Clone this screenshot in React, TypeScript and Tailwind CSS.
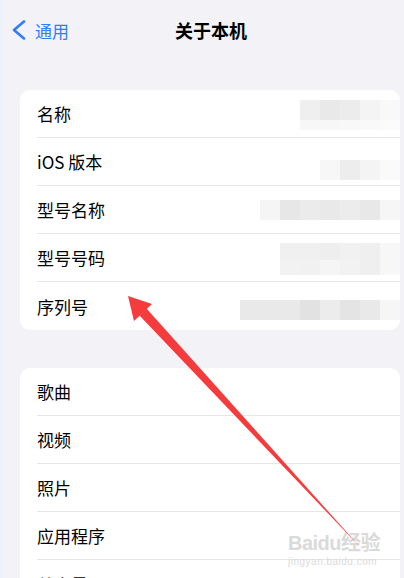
type Mosaic = {
  top: string;
  bands: { h: string; cells: string[] }[];
};

type Row = {
  label: string;
  mosaic?: Mosaic;
};

const aboutRows: Row[] = [
  {
    label: "名称",
    mosaic: {
      top: "mt-[10px]",
      bands: [
        { h: "h-5", cells: ["bg-[#efefef]", "bg-[#e9e9e9]", "bg-[#ececec]", "bg-[#f4f4f4]", "bg-[#f9f9f9]"] },
        { h: "h-[10px]", cells: ["bg-[#f7f7f7]", "bg-[#f7f7f7]", "bg-[#f8f8f8]", "bg-[#f9f9f9]", "bg-[#fbfbfb]"] },
      ],
    },
  },
  {
    label: "iOS 版本",
    mosaic: {
      top: "mt-[22px]",
      bands: [{ h: "h-5", cells: ["bg-[#f7f7f7]", "bg-[#ededed]", "bg-[#f4f4f4]", "bg-[#fafafa]"] }],
    },
  },
  {
    label: "型号名称",
    mosaic: {
      top: "mt-[14px]",
      bands: [
        {
          h: "h-5",
          cells: ["bg-[#f5f5f5]", "bg-[#e7e7e7]", "bg-[#ebebeb]", "bg-[#e9e9e9]", "bg-[#ececec]", "bg-[#e8e8e8]", "bg-[#f6f6f6]"],
        },
      ],
    },
  },
  {
    label: "型号号码",
    mosaic: {
      top: "mt-[9px]",
      bands: [
        { h: "h-[17px]", cells: ["bg-[#f0f0f0]", "bg-[#f0f0f0]", "bg-[#eeeeee]", "bg-[#f1f1f1]", "bg-[#efefef]", "bg-[#f7f7f7]"] },
        { h: "h-[15px]", cells: ["bg-[#f2f2f2]", "bg-[#f1f1f1]", "bg-[#f5f5f5]", "bg-[#f2f2f2]", "bg-[#efefef]", "bg-[#f7f7f7]"] },
      ],
    },
  },
  {
    label: "序列号",
    mosaic: {
      top: "mt-[18px]",
      bands: [
        {
          h: "h-5",
          cells: [
            "bg-[#e9e9e9]",
            "bg-[#e9e9e9]",
            "bg-[#e9e9e9]",
            "bg-[#e2e2e2]",
            "bg-[#ececec]",
            "bg-[#e4e4e4]",
            "bg-[#e9e9e9]",
            "bg-[#f6f6f6]",
          ],
        },
      ],
    },
  },
];

const storageRows: Row[] = [
  { label: "歌曲" },
  { label: "视频" },
  { label: "照片" },
  { label: "应用程序" },
  { label: "总容量" },
];

function MosaicBlock({ mosaic }: { mosaic: Mosaic }) {
  return (
    <div className={`ml-auto flex flex-col self-start ${mosaic.top}`}>
      {mosaic.bands.map((band, i) => (
        <div key={i} className="flex">
          {band.cells.map((cell, j) => (
            <div key={j} className={`w-5 ${band.h} ${cell}`} />
          ))}
        </div>
      ))}
    </div>
  );
}

function Group({ rows }: { rows: Row[] }) {
  return (
    <div className="ml-[17px] w-[380px] overflow-hidden rounded-[10px] bg-white">
      {rows.map((row, index) => (
        <div key={row.label} className="flex h-12 pl-[17px]">
          <div
            className={`flex flex-1 items-stretch ${index < rows.length - 1 ? "border-b border-[#e6e6e9]" : ""}`}
          >
            <span className="self-center text-[17px] leading-none text-black">{row.label}</span>
            {row.mosaic && <MosaicBlock mosaic={row.mosaic} />}
          </div>
        </div>
      ))}
    </div>
  );
}

export default function App() {
  return (
    <div
      className="relative h-[578px] w-[404px] overflow-hidden border-l-[3px] border-[#edf1f9] bg-[#f2f2f7]"
      style={{ fontFamily: '"Noto Sans CJK SC", "Noto Sans", sans-serif' }}
    >
      <header className="relative flex h-[60px] items-center">
        <div className="flex items-center pl-[9px] text-[#2f7ef6]">
          <svg width="14" height="20" viewBox="0 0 14 20" fill="none">
            <polyline
              points="12,1.5 2,10 12,18.5"
              stroke="currentColor"
              strokeWidth="2.6"
              strokeLinecap="round"
              strokeLinejoin="round"
            />
          </svg>
          <span className="ml-[9px] text-[17px] leading-none">通用</span>
        </div>
        <h1 className="absolute left-[172px] text-[18px] font-semibold leading-none text-black">关于本机</h1>
      </header>

      <div className="mt-[30px]">
        <Group rows={aboutRows} />
      </div>

      <div className="mt-[38px]">
        <Group rows={storageRows} />
      </div>

      {/* watermark */}
      <div className="pointer-events-none absolute left-[285px] top-[533px] flex flex-col items-start text-[#dadada]">
        <span
          className="text-[20px] font-bold leading-none tracking-tight"
          style={{ fontFamily: '"Liberation Sans", "Noto Sans CJK SC", sans-serif' }}
        >
          Baidu经验
        </span>
        <span
          className="mt-[4px] text-[10px] leading-none tracking-[0.5px]"
          style={{ fontFamily: '"Liberation Sans", sans-serif' }}
        >
          jingyan.baidu.com
        </span>
      </div>

      {/* annotation arrow */}
      <svg className="pointer-events-none absolute left-0 top-0" width="404" height="578" viewBox="0 0 404 578">
        <polygon points="125,296 131,321 149,304" fill="#f53b3b" />
        <polygon points="136.5,315.5 143.5,308.5 358,548" fill="#f53b3b" />
      </svg>
    </div>
  );
}
